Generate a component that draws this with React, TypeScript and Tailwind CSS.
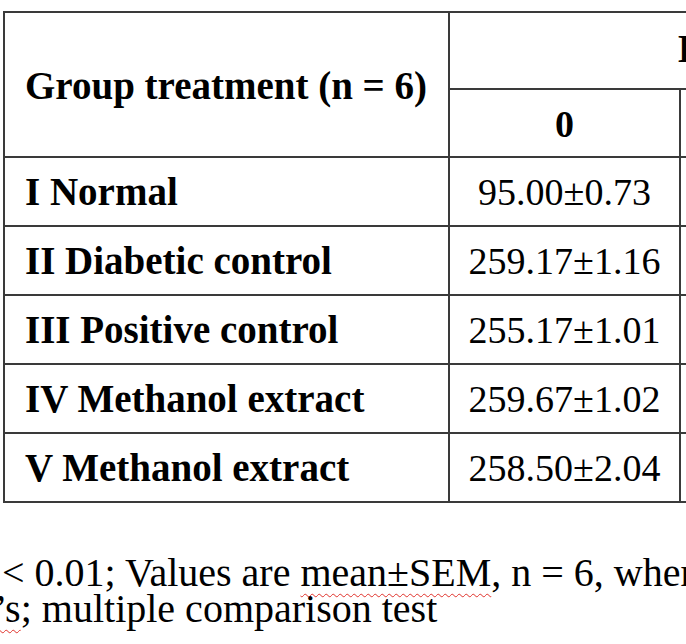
const rows: [string, string][] = [
  ['I Normal', '95.00±0.73'],
  ['II Diabetic control', '259.17±1.16'],
  ['III Positive control', '255.17±1.01'],
  ['IV Methanol extract', '259.67±1.02'],
  ['V Methanol extract', '258.50±2.04'],
];

export default function App() {
  return (
    <div className="w-[686px] h-[644px] overflow-hidden bg-white text-black font-['Liberation_Serif','Times_New_Roman',serif]">
      <div className="pt-[11px] pl-[3px]">
        <table className="table-fixed border-collapse w-[907px]">
          <colgroup>
            <col className="w-[445px]" />
            <col className="w-[231px]" />
            <col className="w-[231px]" />
          </colgroup>
          <thead>
            <tr className="h-[77px]">
              <th
                rowSpan={2}
                className="border-2 border-[#3a3a3a] text-left pl-[20px] pt-[2px] text-[39px] font-bold leading-none whitespace-nowrap"
              >
                Group treatment (n = 6)
              </th>
              <th
                colSpan={2}
                className="border-2 border-[#3a3a3a] text-left pl-[228px] pb-[4px] text-[39px] font-bold leading-none whitespace-nowrap"
              >
                Blood glucose level (mg/dL)
              </th>
            </tr>
            <tr className="h-[68px]">
              <th className="border-2 border-[#3a3a3a] text-center text-[38px] font-bold leading-none pt-[2px]">0</th>
              <th className="border-2 border-[#3a3a3a]"></th>
            </tr>
          </thead>
          <tbody>
            {rows.map(([label, value]) => (
              <tr key={label} className="h-[69px]">
                <td className="border-2 border-[#3a3a3a] pl-[20px] text-[39px] font-bold leading-none whitespace-nowrap">
                  {label}
                </td>
                <td className="border-2 border-[#3a3a3a] text-center text-[38px] leading-none">{value}</td>
                <td className="border-2 border-[#3a3a3a]"></td>
              </tr>
            ))}
          </tbody>
        </table>
      </div>

      <div className="mt-[52px] text-[40px] leading-[36px] whitespace-nowrap">
        <p className="pl-[2px]">
          &lt; 0.01; Values are{' '}
          <span className="underline decoration-wavy decoration-[#e0322b] decoration-1 underline-offset-[7px]">
            mean±SEM
          </span>
          , n = 6, where
        </p>
        <p className="-ml-[6px]">
          <span className="underline decoration-wavy decoration-[#e0322b] decoration-1 underline-offset-[7px]">’s</span>
          ; multiple comparison test
        </p>
      </div>
    </div>
  );
}
